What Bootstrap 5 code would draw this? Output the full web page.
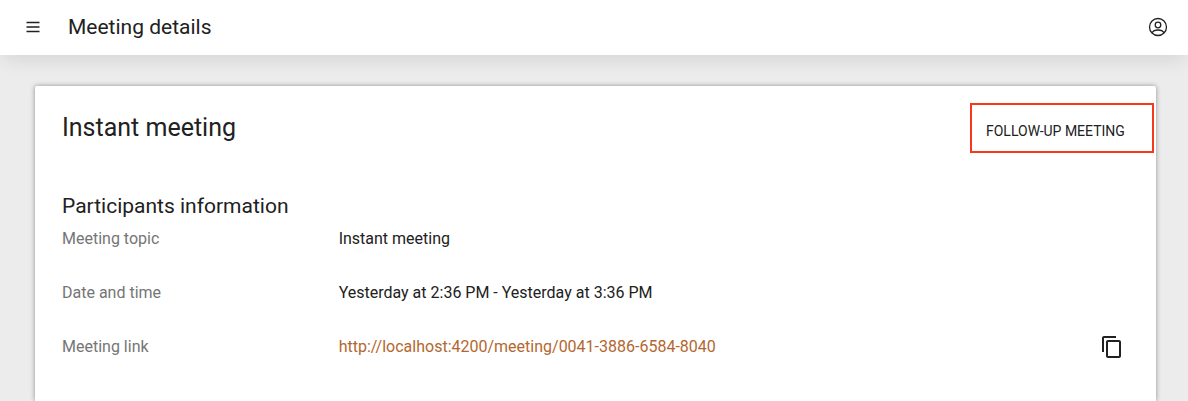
<!DOCTYPE html>
<html lang="en">
<head>
<meta charset="utf-8">
<meta name="viewport" content="width=device-width, initial-scale=1">
<title>Meeting details</title>
<link href="https://cdn.jsdelivr.net/npm/bootstrap@5.3.0/dist/css/bootstrap.min.css" rel="stylesheet">
<style>
  body { font-family: Roboto, "Liberation Sans", sans-serif; font-size: 16px; line-height: 24px; color: #212121; background: #ececec; min-height: 100vh; }
  .topbar { height: 55px; padding: 0 17px 2px 20px; gap: 22px; box-shadow: 0 8px 20px -4px rgba(0,0,0,.11); }
  .icon-btn { width: 26px; height: 32px; padding: 0; border: 0; color: #212121; }
  .page-title { font-size: 21px; line-height: 28px; }
  .page-main { padding: 31px 32px 0 35px; }
  .sheet { border-radius: 2px 2px 0 0; padding: 17px 2px 32px 27px; box-shadow: 0 0 5px rgba(0,0,0,.4); }
  .sheet-title { font-size: 25px; line-height: 32px; }
  .follow-btn { width: 184px; height: 50px; padding: 6px 24px 0 14px; font-size: 14px; border: 2px solid #f5391b; border-radius: 0; color: #212121; }
  .section-title { font-size: 21px; line-height: 28px; margin: 39px 0 7px; }
  .details { gap: 30px; padding-right: 28px; }
  .details dt { width: 26%; color: #757575; }
  .meeting-url { color: #b3672f; }
  .copy-btn { width: 28px; height: 24px; }
</style>
</head>
<body class="d-flex flex-column">
<header class="topbar d-flex align-items-center bg-white flex-shrink-0 position-relative">
  <button type="button" class="btn icon-btn d-flex align-items-center justify-content-center" aria-label="Menu">
    <svg width="14" height="12" viewBox="0 0 14 12" fill="none" stroke="currentColor" stroke-width="1.6"><path d="M.5 1.5h13M.5 6h13M.5 10.5h13"/></svg>
  </button>
  <h1 class="page-title fw-normal mb-0">Meeting details</h1>
  <button type="button" class="btn icon-btn ms-auto d-flex align-items-center justify-content-center" aria-label="Account">
    <svg width="20" height="20" viewBox="0 0 20 20" fill="none" stroke="currentColor" stroke-width="1.3"><circle cx="10" cy="10" r="8.5"/><circle cx="10" cy="8" r="2.8"/><path d="M4.2 15.800c1.200-2.500 3.200-2.800 5.800-2.800s4.600.3 5.800 2.800"/></svg>
  </button>
</header>
<main class="page-main d-flex flex-column flex-grow-1">
  <section class="sheet bg-white flex-grow-1">
    <div class="d-flex align-items-center justify-content-between">
      <h2 class="sheet-title fw-normal mb-0">Instant meeting</h2>
      <button type="button" class="btn follow-btn text-uppercase text-nowrap text-start">Follow-up meeting</button>
    </div>
    <h3 class="section-title fw-normal">Participants information</h3>
    <dl class="details d-flex flex-column mb-0">
      <div class="d-flex">
        <dt class="fw-normal flex-shrink-0">Meeting topic</dt>
        <dd class="mb-0">Instant meeting</dd>
      </div>
      <div class="d-flex">
        <dt class="fw-normal flex-shrink-0">Date and time</dt>
        <dd class="mb-0">Yesterday at 2:36 PM - Yesterday at 3:36 PM</dd>
      </div>
      <div class="d-flex">
        <dt class="fw-normal flex-shrink-0">Meeting link</dt>
        <dd class="mb-0 flex-grow-1 d-flex justify-content-between">
          <a class="meeting-url text-decoration-none" href="http://localhost:4200/meeting/0041-3886-6584-8040">http://localhost:4200/meeting/0041-3886-6584-8040</a>
          <button type="button" class="btn icon-btn copy-btn d-flex align-items-center justify-content-center" aria-label="Copy meeting link">
            <svg width="24" height="24" viewBox="0 0 24 24" fill="currentColor"><path d="M16 1H4c-1.100 0-2 .9-2 2v14h2V3h12V1zm3 4H8c-1.100 0-2 .9-2 2v14c0 1.100.9 2 2 2h11c1.100 0 2-.9 2-2V7c0-1.100-.9-2-2-2zm0 16H8V7h11v14z"/></svg>
          </button>
        </dd>
      </div>
    </dl>
  </section>
</main>
<script src="https://cdn.jsdelivr.net/npm/bootstrap@5.3.0/dist/js/bootstrap.bundle.min.js"></script>
</body>
</html>
